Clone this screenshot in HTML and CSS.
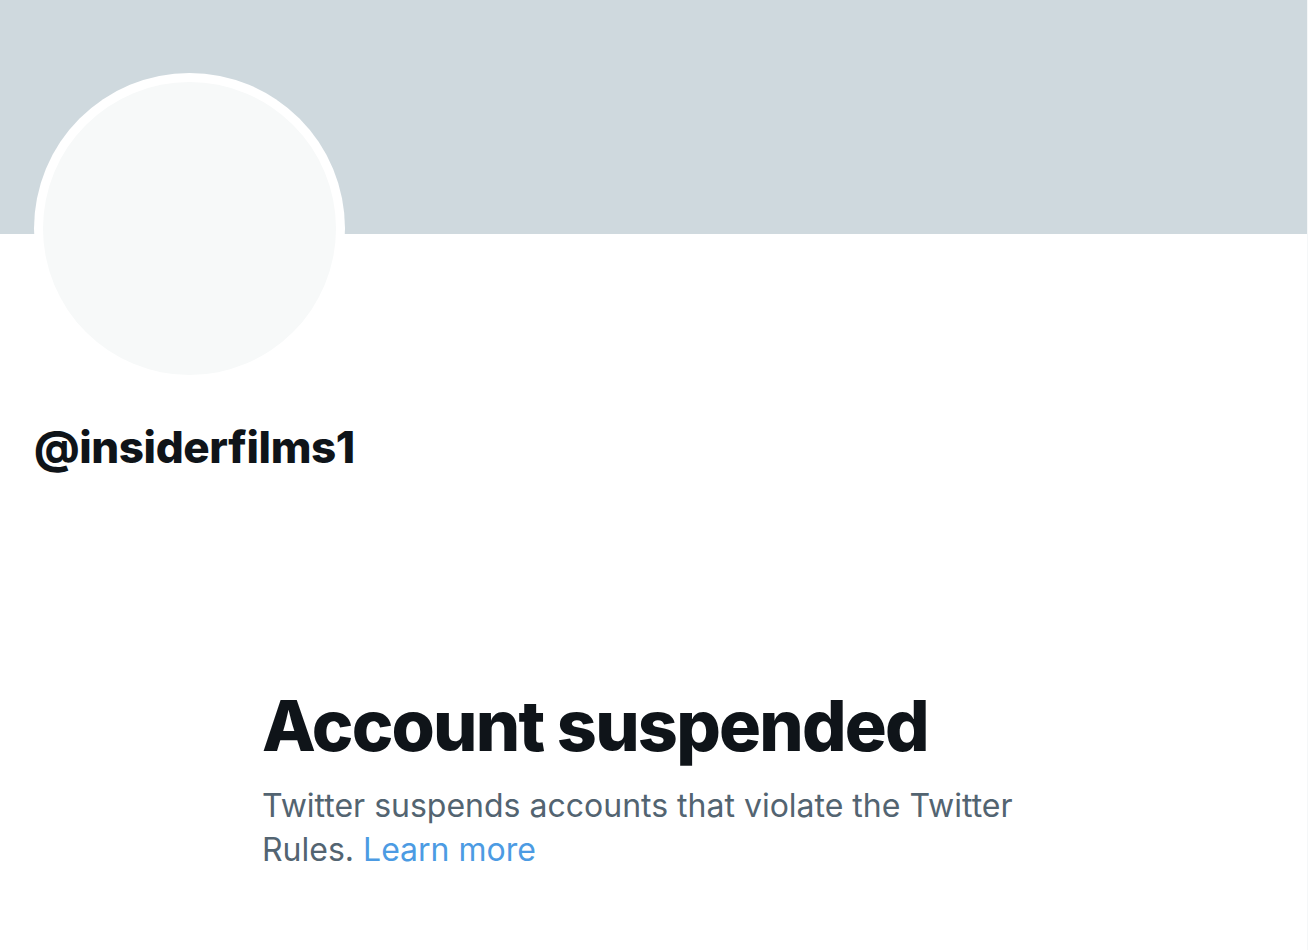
FILE: index.html
```html
<!DOCTYPE html>
<html lang="en">
<head>
<meta charset="utf-8">
<title>@insiderfilms1 / Twitter</title>
<link rel="stylesheet" href="styles.css">
</head>
<body>
<div class="page">
  <div class="banner"></div>
  <div class="profile">
    <div class="avatar"><div class="avatar-inner"></div></div>
    <div class="handle">@insiderfilms1</div>
  </div>
  <div class="notice">
    <h1 class="notice-title">Account suspended</h1>
    <p class="notice-text">Twitter suspends accounts that violate the Twitter Rules. <a href="#" class="notice-link">Learn more</a></p>
  </div>
</div>
</body>
</html>
```
FILE: styles.css
```css
html, body {
  margin: 0;
  padding: 0;
  background: #ffffff;
}
body {
  font-family: Inter, "Liberation Sans", sans-serif;
  color: #0f1419;
}
.page {
  width: 1308px;
  height: 950px;
  overflow: hidden;
  border-right: 1px solid #f5f7f8;
  box-sizing: border-box;
}
.banner {
  height: 234px;
  background: #cfd9de;
}
.profile {
  padding-left: 34px;
}
.avatar {
  width: 311px;
  height: 311px;
  margin-top: -161px;
  border-radius: 50%;
  background: #ffffff;
  display: flex;
  align-items: center;
  justify-content: center;
}
.avatar-inner {
  width: 293px;
  height: 293px;
  border-radius: 50%;
  background: #f7f9f9;
}
.handle {
  margin-top: 37px;
  font-size: 44px;
  font-weight: 800;
  line-height: 52px;
  letter-spacing: -0.4px;
}
.notice {
  margin-top: 211px;
  padding-left: 262px;
  width: 770px;
}
.notice-title {
  margin: 0;
  font-size: 70px;
  font-weight: 800;
  line-height: 84px;
  letter-spacing: -1.8px;
}
.notice-text {
  margin: 16px 0 0;
  font-size: 32px;
  line-height: 44px;
  color: #536471;
}
.notice-link {
  color: #4c9be3;
  text-decoration: none;
}
```
